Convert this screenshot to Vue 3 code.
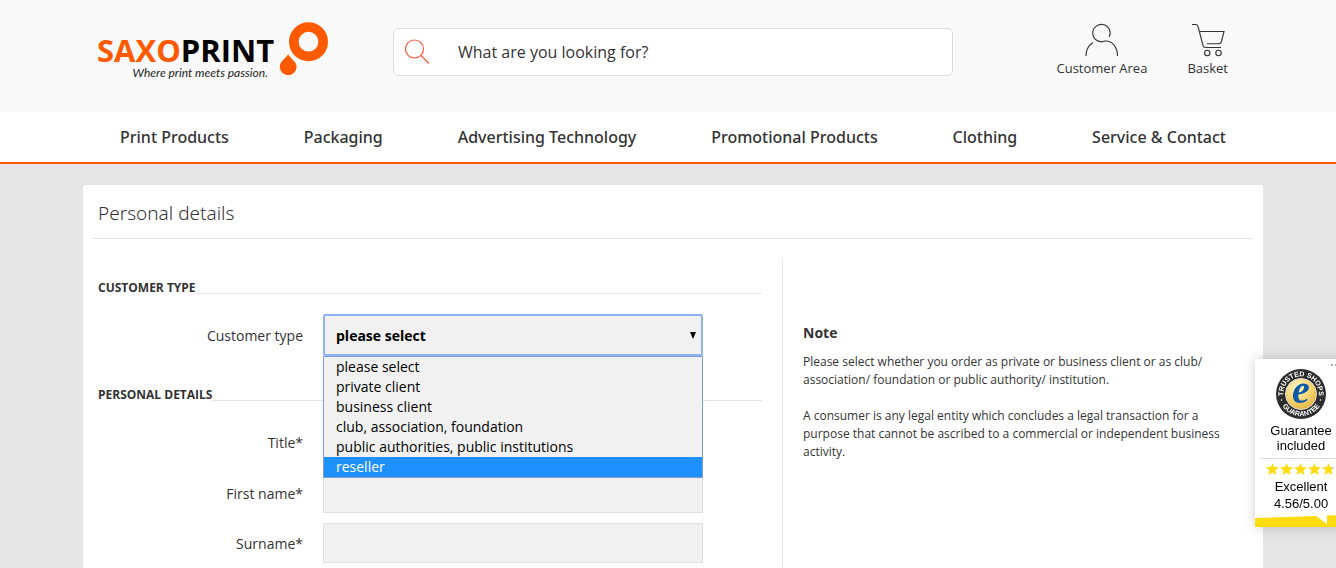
<template>
  <div class="page">
    <header class="header">
      <div class="container header-row">
        <a class="logo" href="#" aria-label="Saxoprint">
          <span class="logo-text">
            <span class="logo-name"><span class="logo-accent">SAXO</span>PRINT</span>
            <span class="logo-claim">Where print meets passion.</span>
          </span>
          <svg class="logo-mark" width="50" height="56" viewBox="0 0 50 56">
            <circle cx="29.500" cy="21.700" r="14.700" fill="none" stroke="#ff5a00" stroke-width="9.600" />
            <path d="M9.200 34 C10.200 38 17.600 40.800 17.600 46.800 A8.400 8.400 0 0 1 0.800 46.800 C0.800 40.800 6.800 38.800 9.200 34 Z" fill="#ff5a00" />
          </svg>
        </a>

        <form class="search" role="search" @submit.prevent>
          <button class="search-button" type="submit" aria-label="Search">
            <svg width="26" height="26" viewBox="0 0 26 26" fill="none" stroke="#ff5a3c" stroke-width="1.200">
              <circle cx="9.500" cy="10" r="9" />
              <path d="M16 16.500 L24 24.500" />
            </svg>
          </button>
          <input v-model="query" class="search-input" type="text" placeholder="What are you looking for?" aria-label="Search term" />
        </form>

        <div class="header-links">
          <a class="header-link" href="#">
            <svg width="34" height="34" viewBox="0 0 34 34" fill="none" stroke="#333" stroke-width="1.100">
              <path d="M24.300 13.800 A8.700 8.700 0 1 0 19.800 18.100" />
              <path d="M1 33 C1 27 3.500 22.500 8 19.500" />
              <path d="M19.800 18.100 C27 17.500 32.500 24 32.500 33" />
            </svg>
            <span>Customer Area</span>
          </a>
          <a class="header-link" href="#">
            <svg width="34" height="34" viewBox="0 0 34 34" fill="none" stroke="#333" stroke-width="1.100">
              <path d="M1 1.500 H5 C6.500 1.500 6.800 2.500 7.200 4 L12 22.500 C12.500 24.200 13 24.500 14.500 24.500 H30" />
              <path d="M8.500 8.500 H33 L30.500 18.500 C30 20.300 29.500 20.700 28 20.700 H16" />
              <circle cx="16.300" cy="30" r="2.700" />
              <circle cx="27.500" cy="30" r="2.700" />
            </svg>
            <span>Basket</span>
          </a>
        </div>
      </div>
    </header>

    <nav class="nav">
      <div class="container nav-row">
        <a v-for="item in navItems" :key="item" class="nav-link" href="#">{{ item }}</a>
      </div>
    </nav>

    <main class="main">
      <div class="container card">
        <h1 class="title">Personal details</h1>
        <div class="columns">
          <form class="form" @submit.prevent>
            <h2 class="section-title">CUSTOMER TYPE</h2>
            <div class="field">
              <label for="customer-type">Customer type</label>
              <div class="select-wrapper">
                <select id="customer-type" v-model="customerType" class="control select open">
                  <option v-for="option in customerTypes" :key="option" :value="option">{{ option }}</option>
                </select>
                <svg class="select-arrow" width="6" height="7" viewBox="0 0 6 7"><path d="M0 0 H6 L3 7 Z" /></svg>
                <ul class="select-menu" role="listbox" aria-label="Customer type">
                  <li
                    v-for="option in customerTypes"
                    :key="option"
                    role="option"
                    :aria-selected="option === customerType"
                    :class="{ active: option === highlighted }"
                    @mouseenter="highlighted = option"
                    @click="customerType = option"
                  >{{ option }}</li>
                </ul>
              </div>
            </div>

            <h2 class="section-title second">PERSONAL DETAILS</h2>
            <div class="field">
              <label for="title">Title*</label>
              <select id="title" class="control select">
                <option></option>
                <option>Mr</option>
                <option>Mrs</option>
              </select>
            </div>
            <div class="field">
              <label for="first-name">First name*</label>
              <input id="first-name" class="control" type="text" />
            </div>
            <div class="field">
              <label for="surname">Surname*</label>
              <input id="surname" class="control" type="text" />
            </div>
          </form>

          <aside class="note">
            <h3>Note</h3>
            <p>Please select whether you order as private or business client or as club/ association/ foundation or public authority/ institution.</p>
            <p>A consumer is any legal entity which concludes a legal transaction for a purpose that cannot be ascribed to a commercial or independent business activity.</p>
          </aside>
        </div>
      </div>
    </main>

    <aside class="trust">
      <svg class="trust-dots" width="12" height="2" viewBox="0 0 12 2" fill="#aaa">
        <path d="M0 0h2v2H0z M4 0h2v2H4z M8 0h2v2H8z" />
      </svg>
      <svg class="trust-seal" width="50" height="50" viewBox="0 0 50 50">
        <defs>
          <radialGradient id="gold" cx="40%" cy="30%" r="75%">
            <stop offset="0" stop-color="#fff6d2" />
            <stop offset="0.500" stop-color="#f7d978" />
            <stop offset="1" stop-color="#e3b23c" />
          </radialGradient>
          <path id="arc-top" d="M9 32.500 A17.700 17.700 0 1 1 41 32.500" />
          <path id="arc-bottom" d="M4.500 33.500 A22.200 22.200 0 0 0 45.500 33.500" />
        </defs>
        <circle cx="25" cy="25" r="25" fill="#2d2d2d" />
        <circle cx="25" cy="25" r="15.500" fill="url(#gold)" stroke="#ddd" stroke-width="1" />
        <text class="seal-text"><textPath href="#arc-top" startOffset="50%" text-anchor="middle">TRUSTED SHOPS</textPath></text>
        <text class="seal-text"><textPath href="#arc-bottom" startOffset="50%" text-anchor="middle">GUARANTEE</textPath></text>
        <circle cx="5.500" cy="31" r="0.800" fill="#fff" />
        <circle cx="44.500" cy="31" r="0.800" fill="#fff" />
        <text class="seal-e" x="25" y="34" text-anchor="middle">e</text>
      </svg>
      <div class="trust-label">Guarantee<br />included</div>
      <div class="trust-rating">
        <svg class="trust-stars" width="70" height="12" viewBox="0 0 70 12">
          <defs>
            <linearGradient id="partial">
              <stop offset="0.800" stop-color="#ffdc0f" />
              <stop offset="0.800" stop-color="#ccc" />
            </linearGradient>
          </defs>
          <path
            v-for="n in 5"
            :key="n"
            d="M6.500 0 L8.200 4.100 L13 4.500 L9.400 7.400 L10.600 12 L6.500 9.500 L2.400 12 L3.600 7.400 L0 4.500 L4.800 4.100 Z"
            :transform="`translate(${(n - 1) * 14} 0)`"
            :fill="n === 5 ? 'url(#partial)' : '#ffdc0f'"
          />
        </svg>
        <span>Excellent</span>
        <span>4.56/5.00</span>
      </div>
      <svg class="trust-tail" width="92" height="12" viewBox="0 0 92 12" fill="#ffdc0f">
        <path d="M0 3 L61 1 L72 9 V0.500 L92 0 V12 H0 Z" />
      </svg>
    </aside>
  </div>
</template>

<script setup>
import { ref } from 'vue'

const navItems = [
  'Print Products',
  'Packaging',
  'Advertising Technology',
  'Promotional Products',
  'Clothing',
  'Service & Contact',
]

const customerTypes = [
  'please select',
  'private client',
  'business client',
  'club, association, foundation',
  'public authorities, public institutions',
  'reseller',
]

const query = ref('')
const customerType = ref('please select')
const highlighted = ref('reseller')
</script>

<style>
body {
  margin: 0;
  background: #e5e5e5;
}
</style>

<style scoped>
* {
  box-sizing: border-box;
}
.page {
  min-height: 100vh;
  display: flex;
  flex-direction: column;
  font-family: "Open Sans", "Noto Sans", sans-serif;
  font-size: 14px;
  color: #333;
}
a {
  color: inherit;
  text-decoration: none;
}
.header,
.nav,
.main {
  padding-left: 10px;
}
.container {
  width: 100%;
  max-width: 1180px;
  margin: 0 auto;
}
.header {
  background: #f9f9f9;
}
.header-row {
  height: 112px;
  display: flex;
  align-items: flex-start;
  padding: 20px 35px 0 14px;
}
.logo {
  display: flex;
  width: 296px;
  gap: 5px;
}
.logo-text {
  display: flex;
  flex-direction: column;
  width: 177px;
  padding-top: 14px;
}
.logo-name {
  font-size: 31px;
  line-height: 32px;
  font-weight: 700;
  color: #000;
}
.logo-accent {
  color: #ff5a00;
}
.logo-claim {
  padding-right: 6px;
  font-family: Lato, sans-serif;
  font-size: 12px;
  line-height: 14px;
  font-style: italic;
  text-align: right;
  white-space: nowrap;
  color: #222;
}
.search {
  display: flex;
  align-items: center;
  width: 560px;
  height: 48px;
  margin-top: 8px;
  background: #fff;
  border: 1px solid #ddd;
  border-radius: 5px;
}
.search-button {
  display: flex;
  width: 48px;
  padding: 0 11px;
  background: none;
  border: none;
  cursor: pointer;
}
.search-button svg {
  flex: none;
}
.search-input {
  flex: 1;
  height: 100%;
  padding: 0 16px;
  border: none;
  outline: none;
  background: none;
  font: inherit;
  font-size: 16px;
  color: #333;
}
.search-input::placeholder {
  color: #333;
  opacity: 1;
}
.header-links {
  display: flex;
  gap: 40px;
  margin-left: auto;
  padding-top: 3px;
}
.header-link {
  display: flex;
  flex-direction: column;
  align-items: center;
  font-size: 13px;
  line-height: 22px;
}
.nav {
  background: #fff;
  border-bottom: 2px solid #ff5a00;
}
.nav-row {
  display: flex;
  justify-content: space-between;
  padding: 0 37px;
}
.nav-link {
  font-family: "Noto Sans", sans-serif;
  font-size: 16px;
  line-height: 50px;
  font-weight: 500;
  white-space: nowrap;
}
.main {
  flex: 1;
  display: flex;
  padding-top: 21px;
}
.card {
  display: flex;
  flex-direction: column;
  padding: 0 10px;
  background: #fff;
  border-radius: 3px 3px 0 0;
}
.title {
  margin: 0;
  padding: 15px 5px 12px;
  border-bottom: 1px solid #e5e5e5;
  font-family: "Noto Sans", sans-serif;
  font-size: 19px;
  line-height: 26px;
  font-weight: 300;
}
.columns {
  flex: 1;
  display: flex;
  padding-top: 20px;
}
.form {
  display: flex;
  flex-direction: column;
  width: 690px;
  padding: 22px 20px 0 5px;
  border-right: 1px solid #e5e5e5;
}
.section-title {
  display: flex;
  margin: 0 0 20px;
  font-size: 12px;
  line-height: 13px;
  font-weight: 700;
}
.section-title::after {
  content: "";
  flex: 1;
  border-bottom: 1px solid #e5e5e5;
}
.section-title.second {
  margin-top: 22px;
}
.field {
  display: flex;
  align-items: center;
  gap: 20px;
  margin-bottom: 10px;
}
.field label {
  width: 205px;
  text-align: right;
}
.control {
  display: block;
  width: 380px;
  height: 40px;
  padding: 0 12px;
  border: 1px solid #e0e0e0;
  border-radius: 0;
  background: #f1f1f1;
  font: inherit;
  color: #000;
}
.select {
  height: 42px;
  appearance: none;
  font-weight: 700;
}
.select.open {
  border: 2px solid #8db2f5;
  border-radius: 2px;
  padding: 0 11px;
  outline: none;
}
.select-wrapper {
  position: relative;
}
.select-arrow {
  position: absolute;
  top: 18px;
  right: 7px;
  pointer-events: none;
}
.select-menu {
  position: absolute;
  z-index: 2;
  top: 42px;
  left: 0;
  right: 0;
  margin: 0;
  padding: 0;
  list-style: none;
  background: #f1f1f1;
  border: 1px solid #7a9cd8;
  line-height: 20px;
  color: #000;
}
.select-menu li {
  padding: 0 12px;
  cursor: default;
}
.select-menu li.active {
  background: #1e90ff;
  color: #fff;
}
.note {
  flex: 1;
  padding: 62px 20px 0;
  font-size: 12px;
  line-height: 18px;
}
.note h3 {
  margin: 0 0 8px;
  font-size: 14px;
  line-height: 24px;
  font-weight: 700;
}
.note p {
  max-width: 430px;
  margin: 0 0 18px;
}
.trust {
  position: fixed;
  z-index: 5;
  right: -11px;
  bottom: 41px;
  width: 92px;
  height: 168px;
  display: flex;
  flex-direction: column;
  align-items: center;
  padding-top: 10px;
  background: #fff;
  box-shadow: 0 0 12px rgba(0, 0, 0, 0.2);
  font-family: "Liberation Sans", Arial, sans-serif;
  font-size: 13px;
  text-align: center;
  color: #000;
}
.trust-dots {
  position: absolute;
  top: 5px;
  right: 4px;
}
.trust-seal {
  flex: none;
  overflow: visible;
}
.seal-text {
  font-size: 7px;
  font-weight: 700;
  fill: #fff;
}
.seal-e {
  font-family: "Liberation Serif", serif;
  font-size: 40px;
  font-style: italic;
  font-weight: 700;
  fill: #0d5aa7;
}
.trust-label {
  padding: 4px 0 5px;
  line-height: 15px;
}
.trust-rating {
  display: flex;
  flex-direction: column;
  align-items: center;
  width: 82px;
  padding-top: 4px;
  border-top: 1px solid #ddd;
  line-height: 17px;
}
.trust-stars {
  margin-bottom: 3px;
}
.trust-tail {
  flex: none;
  margin-top: auto;
}
</style>
